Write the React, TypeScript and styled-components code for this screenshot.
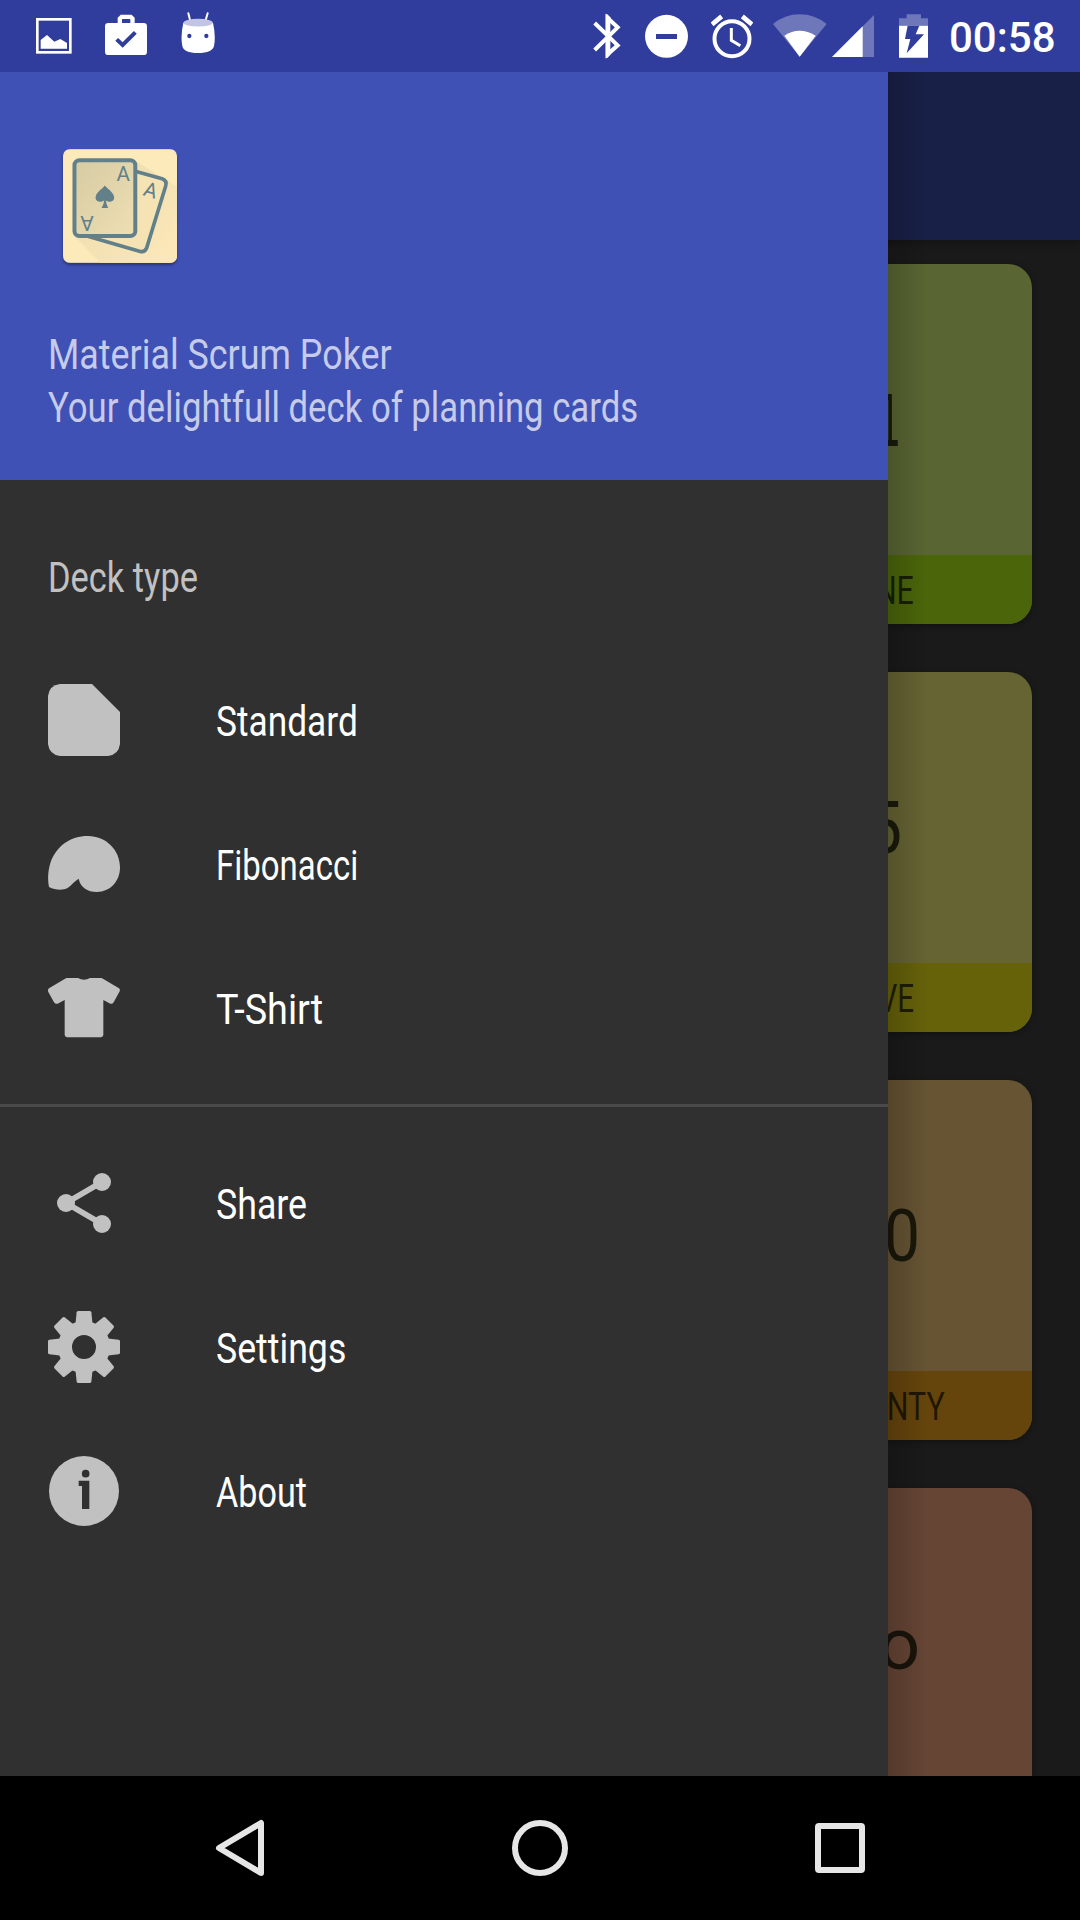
import React, { useLayoutEffect, useRef, useState } from "react";
import styled, { createGlobalStyle } from "styled-components";

const GlobalStyle = createGlobalStyle`
  * { box-sizing: border-box; }
  body { margin: 0; background: #000; }
`;

const Screen = styled.div`
  display: flex;
  flex-direction: column;
  width: 1080px;
  height: 1920px;
  overflow: hidden;
  font-family: Roboto, "Liberation Sans", sans-serif;
`;

/* ---------- status bar ---------- */

const StatusBar = styled.header`
  display: flex;
  align-items: center;
  flex: none;
  height: 72px;
  padding: 0 25px 0 36px;
  background: #303d9d;
  color: #fff;
`;

const StatusIcon = styled.svg<{ $w: number; $gap?: number }>`
  display: block;
  flex: none;
  width: ${(p) => p.$w}px;
  height: 72px;
  margin-left: ${(p) => p.$gap ?? 0}px;
  fill: #fff;
`;

const StatusGroup = styled.div`
  display: flex;
  align-items: center;
`;

const Tray = styled(StatusGroup)`
  margin-left: auto;
`;

const Clock = styled.time`
  width: 106px;
  margin-left: 21px;
  margin-top: 4px;
  font-size: 42px;
  font-weight: 500;
  line-height: 50px;
  white-space: nowrap;
`;

/* ---------- fitted text ---------- */

const FitBox = styled.span<{ $width: number }>`
  display: block;
  width: ${(p) => p.$width}px;
  white-space: nowrap;
`;

const FitInner = styled.span`
  display: inline-block;
  transform-origin: 0 50%;
`;

function FitText({ width, children }: { width: number; children: string }) {
  const ref = useRef<HTMLSpanElement>(null);
  const [scale, setScale] = useState(1);
  useLayoutEffect(() => {
    if (ref.current) setScale(width / ref.current.offsetWidth);
  }, [width, children]);
  return (
    <FitBox $width={width}>
      <FitInner ref={ref} style={{ transform: `scaleX(${scale})` }}>
        {children}
      </FitInner>
    </FitBox>
  );
}

/* ---------- dimmed content behind the drawer ---------- */

const Stage = styled.main`
  position: relative;
  flex: 1;
  overflow: hidden;
  background: #1a1a1a;
`;

const Toolbar = styled.div`
  position: relative;
  height: 168px;
  background: #192048;
  box-shadow: 0 2px 10px rgba(0, 0, 0, 0.35);
`;

const Deck = styled.div`
  display: grid;
  grid-template-columns: 296px;
  grid-auto-rows: 360px;
  row-gap: 48px;
  justify-content: end;
  padding: 24px 48px 0;
`;

const Card = styled.article<{ $bg: string }>`
  display: flex;
  flex-direction: column;
  overflow: hidden;
  border-radius: 24px;
  background: ${(p) => p.$bg};
  box-shadow: 0 2px 6px rgba(0, 0, 0, 0.3);
`;

const CardFace = styled.div`
  display: flex;
  flex: 1;
  align-items: center;
  justify-content: center;
  padding-top: 21px;
  font-size: 73px;
  line-height: 86px;
  color: rgba(8, 8, 0, 0.8);
`;

const FootedFace = styled(CardFace)`
  padding-top: 24px;
  padding-left: 10px;
  font-family: "DejaVu Sans", sans-serif;
  font-size: 71px;
`;

const TightFace = styled(CardFace)`
  padding-right: 11px;
  letter-spacing: -9px;
`;

const CardCaption = styled.div<{ $bg: string }>`
  display: flex;
  flex: none;
  align-items: center;
  justify-content: center;
  height: 69px;
  padding-top: 3px;
  background: ${(p) => p.$bg};
  font-size: 38px;
  color: rgba(8, 8, 0, 0.75);
`;

/* ---------- drawer ---------- */

const Drawer = styled.aside`
  position: absolute;
  inset: 0 auto 0 0;
  display: flex;
  flex-direction: column;
  width: 888px;
  background: #303030;

  &::after {
    content: "";
    position: absolute;
    top: 0;
    bottom: 0;
    left: 100%;
    width: 40px;
    background: linear-gradient(90deg, rgba(0, 0, 0, 0.18), rgba(0, 0, 0, 0));
  }
`;

const DrawerHeader = styled.div`
  display: flex;
  flex-direction: column;
  flex: none;
  height: 408px;
  padding: 77px 48px 0;
  background: #3f51b5;
  color: #c5cbe9;
  font-size: 42px;
  line-height: 53px;
`;

const Logo = styled.svg`
  display: block;
  width: 114px;
  height: 114px;
  margin: 0 0 65px 15px;
  border-radius: 7px;
  box-shadow: 0 2px 3px rgba(0, 0, 0, 0.35);
  font-family: Roboto, sans-serif;
`;

const SectionTitle = styled.h2`
  display: flex;
  align-items: center;
  flex: none;
  height: 144px;
  margin: 24px 0 0;
  padding: 3px 48px 0;
  font-size: 42px;
  font-weight: 400;
  color: #c1c1c1;
`;

const MenuRow = styled.div`
  display: flex;
  align-items: center;
  flex: none;
  gap: 96px;
  height: 144px;
  padding: 0 48px;
`;

const MenuIcon = styled.svg`
  display: block;
  flex: none;
  width: 72px;
  height: 72px;
  fill: #c1c1c1;
`;

const MenuLabel = styled.span`
  padding-top: 3px;
  font-size: 42px;
  line-height: 50px;
  color: #fff;
`;

const Divider = styled.hr`
  flex: none;
  width: 100%;
  height: 3px;
  margin: 24px 0;
  border: 0;
  background: #4a4a4a;
`;

/* ---------- navigation bar ---------- */

const NavBar = styled.nav`
  display: grid;
  grid-template-columns: repeat(3, 300px);
  justify-content: center;
  align-items: center;
  flex: none;
  height: 144px;
  background: #000;
`;

const NavIcon = styled.svg`
  display: block;
  width: 60px;
  height: 60px;
  margin: 0 auto;
  fill: none;
  stroke: #e6e6e6;
  stroke-width: 6;
  stroke-linejoin: round;
`;

const cards = [
  { value: "1", face: FootedFace, valueWidth: 23, caption: "ONE", width: 60, bg: "#596633", foot: "#4b660a" },
  { value: "5", face: CardFace, valueWidth: 36, caption: "FIVE", width: 60, bg: "#666433", foot: "#66620a" },
  { value: "20", face: CardFace, valueWidth: 72, caption: "TWENTY", width: 121, bg: "#665433", foot: "#66450c" },
  { value: "oo", face: TightFace, caption: "", width: 0, bg: "#664535", foot: "#664535" },
];

const teeth = [0, 45, 90, 135, 180, 225, 270, 315];

const deckItems = [
  {
    label: "Standard",
    width: 142,
    box: "54 432 216 216",
    icon: <path d="M90 432H186L270 516V612Q266 644 234 648H90Q58 644 54 612V468Q58 436 90 432Z" />,
  },
  {
    label: "Fibonacci",
    width: 142,
    box: "54 54 216 216",
    icon: (
      <path d="M57 231C52 210 54 180 62 156C80 108 120 78 174 78C228 78 270 120 270 172C270 215 240 246 201 246C172 246 150 230 146 206C135 212 125 225 113 234C98 242 75 240 57 231Z" />
    ),
  },
  {
    label: "T-Shirt",
    width: 107,
    box: "54 486 216 216",
    icon: (
      <path d="M109 504H144Q162 515 180 504H215L267 535Q271 538 269 544L251 577Q247 583 241 581L220 570V675Q219 681 213 682H111Q105 681 104 675V570L83 581Q76 583 72 577L55 546Q52 539 57 535Z" />
    ),
  },
];

const appItems = [
  {
    label: "Share",
    width: 91,
    box: "54 51 216 216",
    icon: (
      <>
        <circle cx="216" cy="96" r="27" />
        <circle cx="108" cy="159" r="27" />
        <circle cx="216" cy="222" r="27" />
        <path d="M216 96L108 159L216 222" fill="none" stroke="#c1c1c1" strokeWidth="17" />
      </>
    ),
  },
  {
    label: "Settings",
    width: 130,
    box: "54 483 216 216",
    icon: (
      <>
        {teeth.map((a) => (
          <path key={a} transform={`rotate(${a} 162 591)`} d="M145 483H179Q183 483 184 487L188 525H136L140 487Q141 483 145 483Z" />
        ))}
        <circle cx="162" cy="591" r="57" fill="none" stroke="#c1c1c1" strokeWidth="42" />
      </>
    ),
  },
  {
    label: "About",
    width: 91,
    box: "54 915 216 216",
    icon: (
      <>
        <circle cx="162" cy="1023" r="105" />
        <g fill="#303030">
          <circle cx="167" cy="971" r="11.5" />
          <path d="M146 992H178V1077H156V1008H146Z" />
        </g>
      </>
    ),
  },
];

export default function App() {
  return (
    <Screen>
      <GlobalStyle />
      <StatusBar>
        <StatusGroup>
          <StatusIcon $w={36} viewBox="108 0 108 216">
            <rect x="112" y="58" width="99" height="99" fill="none" stroke="#fff" strokeWidth="8" />
            <path d="M122 146V120L141 105L163 125L181 117L201 129V146Z" />
          </StatusIcon>
          <StatusIcon $w={42} $gap={33} viewBox="315 0 126 216">
            <rect x="315" y="69" width="126" height="96" rx="10" />
            <path d="M359.500 75V56L365 50.500H392L397.500 56V75" fill="none" stroke="#fff" strokeWidth="13" />
            <path d="M350 118L368 135L406 97" fill="none" stroke="#303d9d" strokeWidth="12" />
          </StatusIcon>
          <StatusIcon $w={34} $gap={34} viewBox="543 0 102 216">
            <path d="M565 40L571 64M623 40L616 64" stroke="#fff" strokeWidth="6" strokeLinecap="round" />
            <path d="M550 68Q541 108 547 138Q551 159 594 159Q637 159 642 138Q648 108 639 68Z" />
            <ellipse cx="594.500" cy="68" rx="44" ry="11.500" fill="#c1c4e2" />
            <circle cx="568" cy="108" r="6.500" fill="#303d9d" />
            <circle cx="619" cy="108" r="6.500" fill="#303d9d" />
          </StatusIcon>
        </StatusGroup>
        <Tray>
          <StatusIcon $w={28} viewBox="70 0 84 216">
            <path d="M75 69L144 136L114 163V54L144 82L75 150" fill="none" stroke="#fff" strokeWidth="12" />
            <path d="M108 43H113L122 52V164L113 174H108Z" />
          </StatusIcon>
          <StatusIcon $w={43} $gap={23.667} viewBox="225 0 129 216">
            <circle cx="289.500" cy="109" r="64.500" />
            <rect x="258" y="102" width="63" height="15" fill="#303d9d" />
          </StatusIcon>
          <StatusIcon $w={42} $gap={22.667} viewBox="422 0 126 216">
            <circle cx="485" cy="116" r="52.500" fill="none" stroke="#fff" strokeWidth="12" />
            <path d="M483 84V121L510 137" fill="none" stroke="#fff" strokeWidth="9" />
            <path d="M425 73L454 49M516 49L545 73" stroke="#fff" strokeWidth="14" />
          </StatusIcon>
          <StatusIcon $w={54} $gap={20} viewBox="608 0 162 216">
            <path d="M688 170L608 72Q643 43 688 43T769 72Z" opacity="0.3" />
            <path d="M688 170L642 107Q664 92 688 92T736 107Z" />
          </StatusIcon>
          <StatusIcon $w={42.333} $gap={5} viewBox="785 0 127 216">
            <path d="M785 171L912 44V171Z" opacity="0.3" />
            <path d="M785 171L877 79V171Z" />
          </StatusIcon>
          <StatusIcon $w={29} $gap={25} viewBox="987 0 87 216">
            <path d="M987 77V55H1010V43H1053V55H1074V77Z" opacity="0.3" />
            <path d="M987 77H1074V173H987Z" />
            <path d="M1013 77L1005 117H1021L1010 160L1062 103H1037L1048 77Z" fill="#303d9d" />
          </StatusIcon>
          <Clock>00:58</Clock>
        </Tray>
      </StatusBar>

      <Stage>
        <Toolbar />
        <Deck>
          {cards.map(({ face: Face, ...c }) => (
            <Card key={c.value} $bg={c.bg}>
              <Face>{c.valueWidth ? <FitText width={c.valueWidth}>{c.value}</FitText> : c.value}</Face>
              <CardCaption $bg={c.foot}>{c.caption && <FitText width={c.width}>{c.caption}</FitText>}</CardCaption>
            </Card>
          ))}
        </Deck>

        <Drawer>
          <DrawerHeader>
            <Logo viewBox="68 57 343 342">
              <defs>
                <linearGradient id="front" x1="0" y1="0" x2="1" y2="1">
                  <stop offset="0" stopColor="#d6cba3" />
                  <stop offset="1" stopColor="#efdfb3" />
                </linearGradient>
                <linearGradient id="shade" x1="0" y1="0" x2="1" y2="1">
                  <stop offset="0.300" stopColor="#efdfb1" />
                  <stop offset="1" stopColor="#fde8b9" />
                </linearGradient>
              </defs>
              <rect x="68" y="57" width="343" height="342" fill="#fdeaba" />
              <path d="M284 90L411 170V399H180L102 318Z" fill="url(#shade)" />
              <path d="M288 124L366 146Q382 152 377 168L320 353Q314 369 298 364L140 318" fill="#f6e3b3" stroke="#62808a" strokeWidth="11" />
              <rect x="102.500" y="90.500" width="183" height="228" rx="15" fill="url(#front)" stroke="#62808a" strokeWidth="12" />
              <g fill="#62808a">
                <path d="M194 166C204 178 222 188 222 203C222 216 205 219 197 211Q198 224 204 234H184Q191 224 192 211C184 219 166 216 166 203C166 188 184 178 194 166Z" />
                <text x="249" y="154" fontSize="62" textAnchor="middle">A</text>
                <text transform="translate(326 201) rotate(17)" fontSize="62" textAnchor="middle">A</text>
                <text transform="translate(140 257) rotate(180)" fontSize="62" textAnchor="middle">A</text>
              </g>
            </Logo>
            <FitText width={344}>Material Scrum Poker</FitText>
            <FitText width={590}>Your delightfull deck of planning cards</FitText>
          </DrawerHeader>

          <SectionTitle>
            <FitText width={150}>Deck type</FitText>
          </SectionTitle>
          {deckItems.map((item) => (
            <MenuRow key={item.label}>
              <MenuIcon viewBox={item.box}>{item.icon}</MenuIcon>
              <MenuLabel>
                <FitText width={item.width}>{item.label}</FitText>
              </MenuLabel>
            </MenuRow>
          ))}
          <Divider />
          {appItems.map((item) => (
            <MenuRow key={item.label}>
              <MenuIcon viewBox={item.box}>{item.icon}</MenuIcon>
              <MenuLabel>
                <FitText width={item.width}>{item.label}</FitText>
              </MenuLabel>
            </MenuRow>
          ))}
        </Drawer>
      </Stage>

      <NavBar>
        <NavIcon viewBox="0 0 60 60">
          <path d="M51 5V55L9 30Z" />
        </NavIcon>
        <NavIcon viewBox="0 0 60 60">
          <circle cx="30" cy="30" r="25" />
        </NavIcon>
        <NavIcon viewBox="0 0 60 60">
          <rect x="8" y="8" width="44" height="44" rx="1" />
        </NavIcon>
      </NavBar>
    </Screen>
  );
}
